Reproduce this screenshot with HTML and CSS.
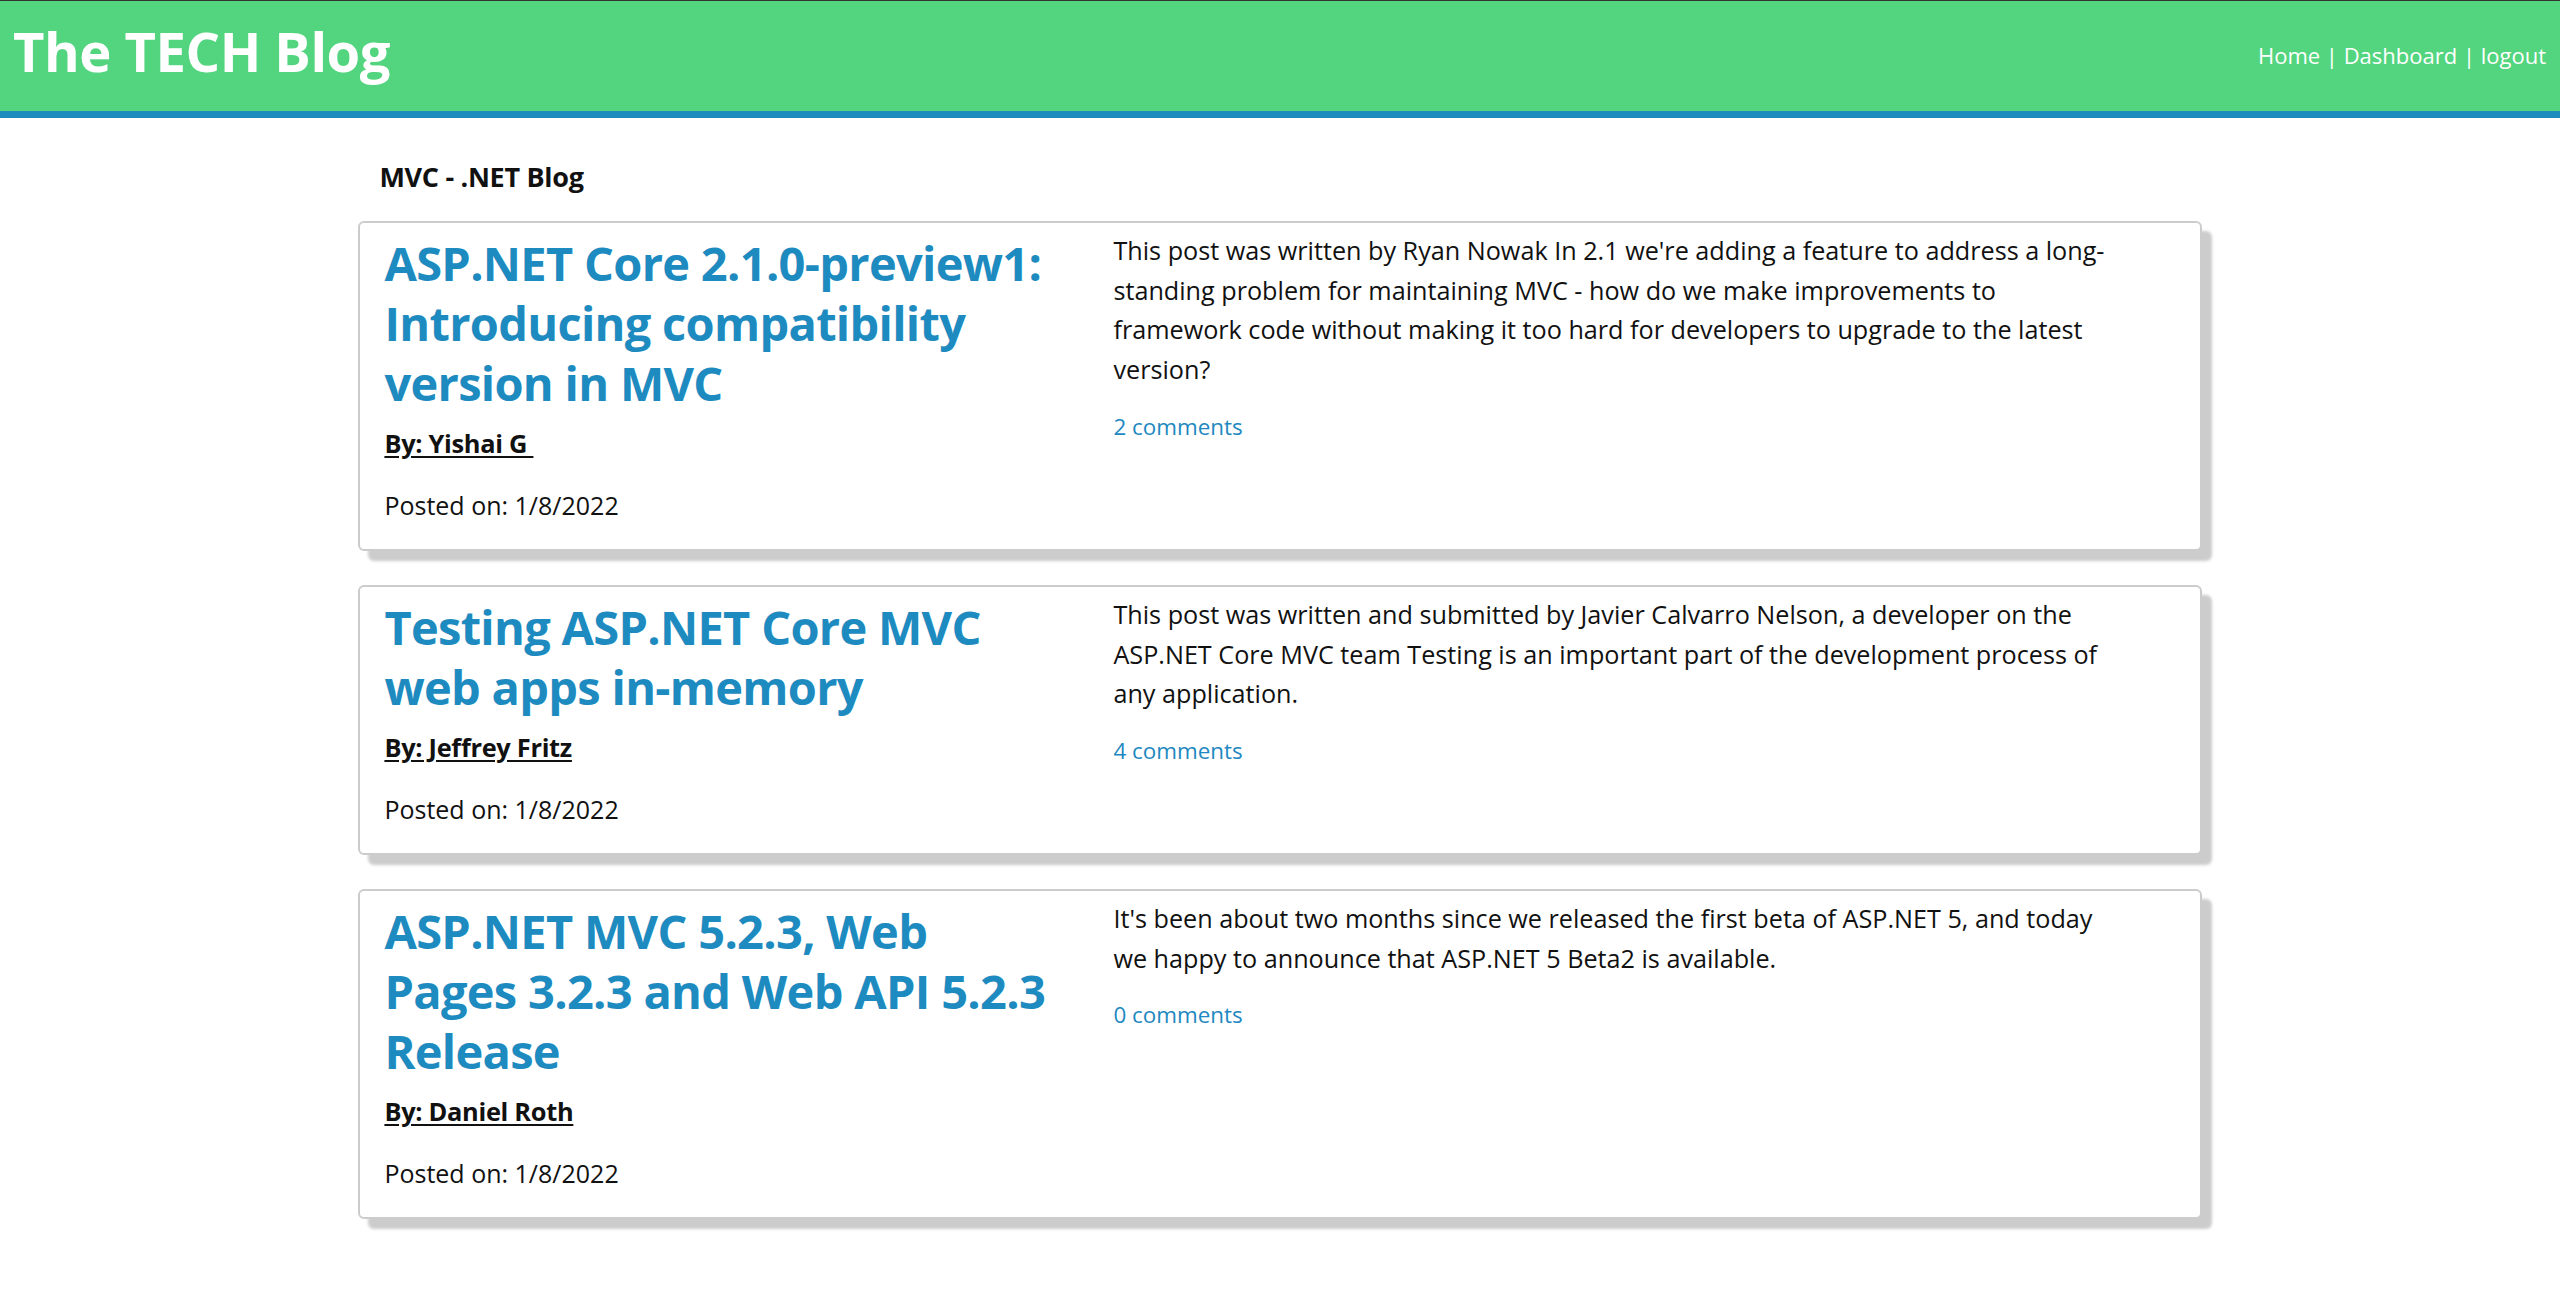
FILE: index.html
```html
<!DOCTYPE html>
<html lang="en">
<head>
<meta charset="utf-8">
<title>The TECH Blog</title>
<link rel="stylesheet" href="styles.css">
</head>
<body>
<header class="site-header">
  <h1 class="brand">The TECH Blog</h1>
  <nav class="nav">
    <a href="#">Home</a> | <a href="#">Dashboard</a> | <a href="#">logout</a>
  </nav>
</header>
<main class="container">
  <h3 class="section-title">MVC - .NET Blog</h3>

  <article class="post">
    <div class="post-meta">
      <h2 class="post-title"><a href="#">ASP.NET Core 2.1.0-preview1: Introducing compatibility version in MVC</a></h2>
      <p class="author"><a href="#">By: Yishai G&nbsp;</a></p>
      <p class="posted">Posted on: 1/8/2022</p>
    </div>
    <div class="post-body">
      <p class="excerpt">This post was written by Ryan Nowak In 2.1 we're adding a feature to address a long-standing problem for maintaining MVC - how do we make improvements to framework code without making it too hard for developers to upgrade to the latest version?</p>
      <a class="comments" href="#">2 comments</a>
    </div>
  </article>

  <article class="post">
    <div class="post-meta">
      <h2 class="post-title"><a href="#">Testing ASP.NET Core MVC web apps in-memory</a></h2>
      <p class="author"><a href="#">By: Jeffrey Fritz</a></p>
      <p class="posted">Posted on: 1/8/2022</p>
    </div>
    <div class="post-body">
      <p class="excerpt">This post was written and submitted by Javier Calvarro Nelson, a developer on the ASP.NET Core MVC team Testing is an important part of the development process of any application.</p>
      <a class="comments" href="#">4 comments</a>
    </div>
  </article>

  <article class="post">
    <div class="post-meta">
      <h2 class="post-title"><a href="#">ASP.NET MVC 5.2.3, Web Pages 3.2.3 and Web API 5.2.3 Release</a></h2>
      <p class="author"><a href="#">By: Daniel Roth</a></p>
      <p class="posted">Posted on: 1/8/2022</p>
    </div>
    <div class="post-body">
      <p class="excerpt">It's been about two months since we released the first beta of ASP.NET 5, and today we happy to announce that ASP.NET 5 Beta2 is available.</p>
      <a class="comments" href="#">0 comments</a>
    </div>
  </article>
</main>
</body>
</html>
```

FILE: styles.css
```css
* { box-sizing: border-box; }

html, body {
  margin: 0;
  padding: 0;
  background: #ffffff;
}

body {
  font-family: "Open Sans", "Noto Sans", "DejaVu Sans", sans-serif;
  color: #111111;
}

.site-header {
  display: flex;
  justify-content: space-between;
  align-items: center;
  height: 118px;
  padding: 0 14px 0 13px;
  background: #52d57e;
  border-top: 1px solid #333333;
  border-bottom: 7px solid #1e8bbf;
}

.brand {
  margin: 0 0 8px 0;
  font-size: 54.4px;
  font-weight: 700;
  color: #ffffff;
  line-height: 1.2;
  letter-spacing: -0.5px;
}

.nav {
  color: #ffffff;
  font-size: 22px;
  margin-bottom: 2px;
}

.nav a {
  color: #ffffff;
  text-decoration: none;
}

.container {
  width: 72%;
  margin: 0 auto;
  padding-top: 43px;
}

.section-title {
  margin: 0 0 28px 21px;
  font-size: 27px;
  line-height: 32px;
  font-weight: 700;
  color: #111111;
  letter-spacing: -0.3px;
}

.post {
  display: grid;
  grid-template-columns: 672px 1000px;
  column-gap: 57px;
  padding: 8px 24px 24px 24px;
  margin-bottom: 34px;
  background: #ffffff;
  border: 2px solid #cccccc;
  border-radius: 6px;
  box-shadow: 10px 10px 3px #cccccc;
}

.post-meta {
  padding-top: 2px;
}

.post-title {
  margin: 0;
  font-size: 47px;
  line-height: 60px;
  font-weight: 700;
  letter-spacing: -0.7px;
}

.post-title a {
  color: #1e8bc0;
  text-decoration: none;
}

.author {
  margin: 10px 0 0 0;
  font-size: 25.4px;
  line-height: 40px;
  font-weight: 700;
  letter-spacing: -0.3px;
}

.author a {
  color: #111111;
  text-decoration: underline;
  text-underline-offset: 3px;
}

.posted {
  margin: 22px 0 0 0;
  font-size: 25px;
  line-height: 40px;
}

.excerpt {
  margin: 0;
  font-size: 25.2px;
  line-height: 39.7px;
}

.comments {
  display: inline-block;
  margin-top: 17px;
  font-size: 22.4px;
  line-height: 40px;
  color: #1e88c0;
  text-decoration: none;
}
```
